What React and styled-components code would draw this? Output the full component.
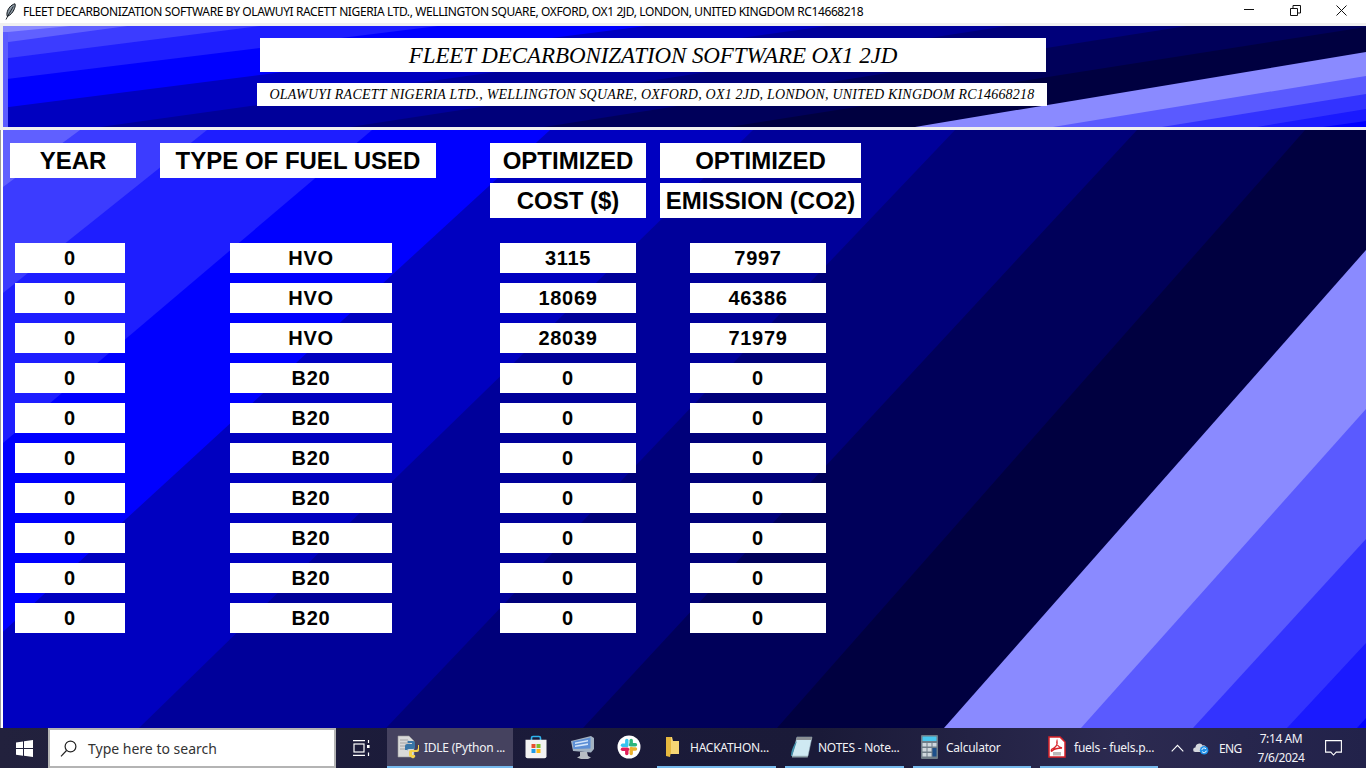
import React from "react";
import styled, { createGlobalStyle } from "styled-components";

const Global = createGlobalStyle`
  html, body { margin: 0; padding: 0; background: #f0f0f0; }
  body { width: 1366px; height: 768px; overflow: hidden; font-family: "Liberation Sans", Arial, sans-serif; }
  * { box-sizing: border-box; }
`;

const Page = styled.div`
  width: 1366px; height: 768px; display: flex; flex-direction: column; overflow: hidden; background: #f0f0f0;
`;
const TitleBar = styled.div`
  height: 23px; flex: none; background: #fff; display: flex; align-items: center; padding: 0 2px 0 5px; margin-bottom: 3px;
`;
const WindowTitle = styled.div`
  margin-left: 7px; flex: 1; font: 12px "Noto Sans", sans-serif; letter-spacing: -0.385px; color: #000; white-space: nowrap;
`;
const Controls = styled.div`display: flex; flex: none; margin-bottom: 3px;`;
const ControlButton = styled.div`
  width: 46px; height: 20px; display: flex; align-items: center; justify-content: center;
`;
const Header = styled.header`
  position: relative; height: 101px; flex: none; margin: 0 0 3px 3px; padding: 12px 0 0 254px; overflow: hidden;
`;
const Art = styled.svg`
  position: absolute; inset: 0; width: 100%; height: 100%; display: block;
`;
const TitleBox = styled.div`
  position: relative; width: 786px; height: 34px; margin-left: 3px; background: #fff; text-align: center;
  font: italic 23px/36px "Liberation Serif", serif; letter-spacing: -0.08px; color: #000; white-space: nowrap;
`;
const SubBox = styled.div`
  position: relative; width: 790px; height: 23px; margin-top: 11px; background: #fff; text-align: center;
  font: italic 14px/23px "Liberation Serif", serif; letter-spacing: 0.21px; color: #000; white-space: nowrap;
`;
const Main = styled.main`
  position: relative; flex: none; height: 598px; margin-left: 3px; padding: 13px 0 0 7px; overflow: hidden;
`;
const MainEdge = styled.div`
  position: absolute; left: 0; top: 130px; width: 3px; height: 598px; background: #fff; border-left: 1px solid #9a9a9a;
`;
const HeadRow = styled.div`position: relative; display: flex; align-items: flex-start; height: 75px; margin-bottom: 25px;`;
const HeadColumn = styled.div`
  display: flex; flex-direction: column; gap: 5px; width: ${p => p.$w}px; margin-right: ${p => p.$after || 0}px;
`;
const HeadCell = styled.div`
  height: 35px; background: #fff; color: #000; text-align: center;
  font: bold 24px/36px "Liberation Sans", Arial, sans-serif; white-space: nowrap;
`;
const Rows = styled.div`position: relative; display: flex; flex-direction: column; gap: 10px; margin-left: 5px;`;
const Row = styled.div`display: flex;`;
const Cell = styled.div`
  width: ${p => p.$w}px; margin-right: ${p => p.$after || 0}px; height: 30px; background: #fff; color: #000; text-align: center;
  font: bold 20px/30px "Liberation Sans", Arial, sans-serif; letter-spacing: 0.7px;
`;
const Taskbar = styled.footer`
  height: 40px; flex: none; display: flex; align-items: stretch; color: #f2f2f6;
  background: linear-gradient(90deg, #22213d 0%, #1b1b3a 30%, #1a1a38 60%, #2c2a50 82%, #22224a 100%);
`;
const StartButton = styled.div`width: 48px; flex: none; display: flex; align-items: center; justify-content: center;`;
const SearchBox = styled.div`
  width: 288px; flex: none; display: flex; align-items: center; padding-left: 10px; gap: 11px; background: #fff;
  border: 2px solid #b4b4b4; color: #333; font: 14px "Noto Sans", sans-serif;
`;
const TaskView = styled.div`width: 51px; flex: none; display: flex; align-items: center; justify-content: center;`;
const TaskItem = styled.div`
  width: ${p => p.$w}px; flex: none; margin-right: ${p => p.$after || 0}px; display: flex; align-items: center;
  padding-left: ${p => p.$pad}px; gap: ${p => p.$gap}px; font: 12px "Noto Sans", sans-serif; letter-spacing: -0.25px; white-space: nowrap;
  background: ${p => (p.$active ? "#45425f" : "transparent")};
  border-bottom: 2px solid #76b9ed;
`;
const PinnedItem = styled.div`
  width: ${p => p.$w}px; flex: none; display: flex; align-items: center; justify-content: center; padding-bottom: 2px;
`;
const Tray = styled.div`flex: 1; display: flex; align-items: center; padding-left: 13px;`;
const TrayIcon = styled.div`display: flex; align-items: center; justify-content: center; width: ${p => p.$w}px; flex: none;`;
const Lang = styled.div`font: 12px "Noto Sans", sans-serif; letter-spacing: -0.7px; width: 30px; margin-left: 1px; flex: none;`;
const Clock = styled.div`
  width: 64px; flex: none; text-align: center; font: 12px/19px "Noto Sans", sans-serif; letter-spacing: -0.4px;
`;

const P = {
  a: "#6060ff", b: "#3c3cff", c: "#1e1eff", d: "#0000ff", e: "#0000c0", f: "#00009a", g: "#00007a", h: "#00005a", i: "#000040",
  j: "#8a8aff", k: "#5a5aff", l: "#3333ff", m: "#1a1aff", n: "#0000ff",
};

const mainEdges = [
  [80, 130, 3, 187, P.b],
  [207, 130, 3, 293, P.c],
  [372, 130, 3, 443, P.d],
  [550, 130, 5, 630, P.e],
  [753, 130, 140, 727, P.f],
  [955, 130, 387, 727, P.g],
  [1137, 130, 583, 728, P.h],
  [1305, 130, 777, 728, P.i],
  [1366, 250, 944, 728, P.j],
  [1366, 409, 1081, 728, P.k],
  [1366, 539, 1193, 728, P.l],
  [1366, 643, 1287, 728, P.m],
  [1366, 718, 1357, 728, P.n],
];
const headerEdges = [
  [120, 27, 8, 42, P.b],
  [260, 26, 8, 58, P.c],
  [438, 26, 8, 79, P.d],
  [646, 26, 8, 107, P.e],
  [827, 26, 100, 127, P.f],
  [1007, 26, 350, 127, P.g],
  [1187, 26, 544, 127, P.h],
  [1366, 27, 729, 127, P.i],
  [1366, 52, 915, 127, P.j],
  [1366, 76, 1053, 127, P.k],
  [1366, 94, 1162, 127, P.l],
  [1366, 109, 1257, 127, P.m],
  [1366, 121, 1323, 127, P.n],
];
const wedge = ([x1, y1, x2, y2]) => {
  const dx = x1 - x2, dy = y1 - y2;
  return `${x1 + dx * 30},${y1 + dy * 30} ${x2 - dx * 30},${y2 - dy * 30} 90000,90000`;
};
const Stripes = ({ box, edges, children, base }) => (
  <Art viewBox={box} preserveAspectRatio="none" aria-hidden="true">
    <rect x="0" y="0" width="1366" height="768" fill={base} />
    {edges.map((e, i) => <polygon key={i} points={wedge(e)} fill={e[4]} />)}
    {children}
  </Art>
);

const Feather = () => (
  <svg width="11" height="17" viewBox="0 0 11 17">
    <path d="M10 .8C6 1.800 2.800 5.500 2 10c-.2 1.300-.1 2.500.3 3.400C5.500 12.300 8.300 9 9.500 5.500 10.100 3.800 10.500 2 10 .8Z" fill="#8d9aa6" stroke="#10161c" strokeWidth="1" />
    <path d="M8.300 3.500 4 10.800 1 16.500" fill="none" stroke="#10161c" strokeWidth=".9" />
  </svg>
);
const MinIcon = () => <svg width="10" height="12" viewBox="0 0 10 12"><path d="M0 5.500h10" stroke="#111" strokeWidth="1" /></svg>;
const RestoreIcon = () => (
  <svg width="11" height="11" viewBox="0 0 11 11" fill="none" stroke="#111">
    <path d="M.5 3.500h7v7h-7zM3 3.500V.5h7.500v7.500H7.500" />
  </svg>
);
const CloseIcon = () => <svg width="11" height="11" viewBox="0 0 11 11"><path d="M.5.5l10 10M10.500.5l-10 10" stroke="#111" strokeWidth="1" /></svg>;

const WinLogo = () => (
  <svg width="17" height="17" viewBox="0 0 17 17" fill="#fff">
    <path d="M0 2.400 7 1.400v6.700H0zM8 1.300 17 0v8.100H8zM0 9h7v6.700L0 14.700zM8 9h9v8l-9-1.200z" />
  </svg>
);
const SearchIcon = () => (
  <svg width="17" height="17" viewBox="0 0 17 17" fill="none" stroke="#222" strokeWidth="1.200">
    <circle cx="10.500" cy="6.500" r="5.400" />
    <path d="M6.500 10.500 1 16.300" />
  </svg>
);
const TaskViewIcon = () => (
  <svg width="17" height="16" viewBox="0 0 17 16" fill="none" stroke="#fff" strokeWidth="1.200">
    <path d="M0 .7h12M0 15.300h12" />
    <rect x="1" y="4" width="10" height="8" />
    <path d="M15.500 0v3M15.500 12.500V16" />
    <rect x="14" y="5" width="2.600" height="3" fill="#fff" stroke="none" />
  </svg>
);
const PythonDoc = () => (
  <svg width="24" height="24" viewBox="0 0 24 24">
    <path d="M1 1h11l5 5v16H1z" fill="#d9d9d9" stroke="#9c9c9c" strokeWidth=".6" />
    <path d="M3 5h8M3 8h10M3 11h7M3 14h6" stroke="#a3a3a3" strokeWidth="1" />
    <path d="M12 6h4a2 2 0 0 1 2 2v4a2 2 0 0 1-2 2h-4a2 2 0 0 0-2 2v-1H8v-4a2 2 0 0 1 2-2h5V8h-4a1 1 0 0 1 1-2Z" fill="#3a76a8" />
    <path d="M22 10v5a2 2 0 0 1-2 2h-5v3h3a2 2 0 0 1-4 2 2 2 0 0 1-2-2v-3a2 2 0 0 1 2-2h5a2 2 0 0 0 2-2v-3Z" fill="#f6d24a" />
  </svg>
);
const StoreIcon = () => (
  <svg width="24" height="24" viewBox="0 0 24 24">
    <path d="M7.500 5V3a1.500 1.500 0 0 1 1.500-1.500h6A1.500 1.500 0 0 1 16.500 3v2" fill="none" stroke="#2fb4ee" strokeWidth="1.600" />
    <path d="M1.500 4.800h21v16.400a2 2 0 0 1-2 2h-17a2 2 0 0 1-2-2z" fill="#f3f3f3" />
    <rect x="7.500" y="9" width="4" height="4" fill="#e8502f" />
    <rect x="12.500" y="9" width="4" height="4" fill="#7ebf2e" />
    <rect x="7.500" y="14" width="4" height="4" fill="#1f9be8" />
    <rect x="12.500" y="14" width="4" height="4" fill="#fdb913" />
  </svg>
);
const MonitorIcon = () => (
  <svg width="24" height="23" viewBox="0 0 24 23">
    <path d="M9 16h7l1 4 3 1.500-3 1.500H10l-4-1.500L9 20z" fill="#b9bec4" />
    <path d="M0 5 20 0l3 2v11l-3 3.500L2 15z" fill="#a3b2c2" />
    <path d="M1.500 5.500 19.500 1.500v11L2.500 13z" fill="#5d8fd6" />
    <path d="M4 6.500l13-2.500v1.600L4 8zM4 9.500l13-2.200v1.600L4 11z" fill="#d4e5fb" />
  </svg>
);
const SlackIcon = () => (
  <svg width="24" height="24" viewBox="0 0 24 24">
    <circle cx="12" cy="12" r="11.500" fill="#fff" />
    <g strokeWidth="3.400" strokeLinecap="round" fill="none">
      <path d="M9.800 5.500v5" stroke="#36c5f0" /><path d="M5.500 10.200h3.500" stroke="#36c5f0" />
      <path d="M18.500 9.800h-5" stroke="#2eb67d" /><path d="M14.200 5.500v3.500" stroke="#2eb67d" />
      <path d="M14.200 18.500v-5" stroke="#ecb22e" /><path d="M18.500 14h-3.500" stroke="#ecb22e" />
      <path d="M5.500 14.200h5" stroke="#e01e5a" /><path d="M9.800 18.500v-3.500" stroke="#e01e5a" />
    </g>
  </svg>
);
const FolderIcon = () => (
  <svg width="13" height="20" viewBox="0 0 13 20">
    <path d="M0 0h6l1 4h6v13H4z" fill="#f7d675" />
    <path d="M0 0h5v15l-1 5-4-1z" fill="#e6b83f" />
  </svg>
);
const NoteIcon = () => (
  <svg width="23" height="23" viewBox="0 0 23 23">
    <path d="M7 1h15l-4 19H2z" fill="#cfe9f2" stroke="#9bb5c0" strokeWidth=".5" />
    <path d="M2 20 7 5c-3 3-6 9-6 15z" fill="#3f8eaa" />
    <path d="M7 1h15l-.6 3H6z" fill="#8a8f94" />
    <path d="M2 20h16l-.3 1.500H2z" fill="#8fa3ab" />
  </svg>
);
const CalcIcon = () => (
  <svg width="17" height="24" viewBox="0 0 17 24">
    <rect width="17" height="24" rx="1" fill="#6f7d88" />
    <rect x="1.500" y="1.500" width="14" height="4.500" fill="#48c6ee" />
    <g fill="#cfd8de">
      <rect x="1.500" y="8" width="4" height="3.500" /><rect x="6.500" y="8" width="4" height="3.500" /><rect x="11.500" y="8" width="4" height="3.500" />
      <rect x="1.500" y="13" width="4" height="3.500" /><rect x="6.500" y="13" width="4" height="3.500" />
      <rect x="1.500" y="18" width="4" height="3.500" /><rect x="6.500" y="18" width="4" height="3.500" />
    </g>
    <rect x="11.500" y="13" width="4" height="8.500" fill="#1d4f8a" />
  </svg>
);
const PdfIcon = () => (
  <svg width="18" height="22" viewBox="0 0 18 22">
    <path d="M1 1h11l5 5v15H1z" fill="#fff" stroke="#d8232a" strokeWidth="1.500" />
    <path d="M4 13c3-1 6-4 5-8-1 3 1 6 5 7-3 0-7 0-10 3-1 1-1-1 0-2Z" fill="none" stroke="#d8232a" strokeWidth="1.300" />
    <rect x="5" y="16" width="8" height="3.500" fill="#b9b9b9" />
  </svg>
);
const Chevron = () => <svg width="13" height="8" viewBox="0 0 13 8"><path d="M.7 7.300 6.500 1.300l5.800 6" fill="none" stroke="#fff" strokeWidth="1.100" /></svg>;
const CloudSync = () => (
  <svg width="16" height="13" viewBox="0 0 18 14">
    <path d="M2.500 11A2.500 2.500 0 0 1 2.800 6 4.500 4.500 0 0 1 11 3.500a3.500 3.500 0 0 1 4 3V11z" fill="#d4d7dd" />
    <circle cx="12.500" cy="9" r="4.800" fill="#1f8fe8" />
    <path d="M10 8.500a2.600 2.600 0 0 1 4.700-1M15 9.500a2.600 2.600 0 0 1-4.700 1" fill="none" stroke="#fff" strokeWidth="1.100" />
  </svg>
);
const Notify = () => (
  <svg width="17" height="16" viewBox="0 0 17 16" fill="none" stroke="#fff" strokeWidth="1.100">
    <path d="M.6.600h15.800v11.500h-5.200L8.500 15l-2.700-2.900H.6z" />
  </svg>
);

const rows = [
  ["0", "HVO", "3115", "7997"],
  ["0", "HVO", "18069", "46386"],
  ["0", "HVO", "28039", "71979"],
  ...Array.from({ length: 7 }, () => ["0", "B20", "0", "0"]),
];

export default function App() {
  return (
    <Page>
      <Global />
      <TitleBar>
        <Feather />
        <WindowTitle>FLEET DECARBONIZATION SOFTWARE BY OLAWUYI RACETT NIGERIA LTD., WELLINGTON SQUARE, OXFORD, OX1 2JD, LONDON, UNITED KINGDOM RC14668218</WindowTitle>
        <Controls>
          <ControlButton><MinIcon /></ControlButton>
          <ControlButton><RestoreIcon /></ControlButton>
          <ControlButton><CloseIcon /></ControlButton>
        </Controls>
      </TitleBar>
      <Header>
        <Stripes box="3 26 1363 101" edges={headerEdges} base={P.a}>
          <rect x="3" y="26" width="5" height="101" fill="#5c5cff" />
          <polygon points="3,26 70,26 8,32 3,32" fill="#8a8aff" />
        </Stripes>
        <TitleBox>FLEET DECARBONIZATION SOFTWARE OX1 2JD</TitleBox>
        <SubBox>OLAWUYI RACETT NIGERIA LTD., WELLINGTON SQUARE, OXFORD, OX1 2JD, LONDON, UNITED KINGDOM RC14668218</SubBox>
      </Header>
      <MainEdge />
      <Main>
        <Stripes box="3 130 1363 598" edges={mainEdges} base={P.a} />
        <HeadRow>
          <HeadColumn $w={126} $after={24}><HeadCell>YEAR</HeadCell></HeadColumn>
          <HeadColumn $w={276} $after={54}><HeadCell>TYPE OF FUEL USED</HeadCell></HeadColumn>
          <HeadColumn $w={156} $after={14}><HeadCell>OPTIMIZED</HeadCell><HeadCell>COST ($)</HeadCell></HeadColumn>
          <HeadColumn $w={201}><HeadCell>OPTIMIZED</HeadCell><HeadCell>EMISSION (CO2)</HeadCell></HeadColumn>
        </HeadRow>
        <Rows>
          {rows.map((r, i) => (
            <Row key={i}>
              <Cell $w={110} $after={105}>{r[0]}</Cell>
              <Cell $w={162} $after={108}>{r[1]}</Cell>
              <Cell $w={136} $after={54}>{r[2]}</Cell>
              <Cell $w={136}>{r[3]}</Cell>
            </Row>
          ))}
        </Rows>
      </Main>
      <Taskbar>
        <StartButton><WinLogo /></StartButton>
        <SearchBox><SearchIcon /><span>Type here to search</span></SearchBox>
        <TaskView><TaskViewIcon /></TaskView>
        <TaskItem $w={126} $active $pad={10} $gap={3}><PythonDoc />IDLE (Python ...</TaskItem>
        <PinnedItem $w={46}><StoreIcon /></PinnedItem>
        <PinnedItem $w={47}><MonitorIcon /></PinnedItem>
        <PinnedItem $w={46}><SlackIcon /></PinnedItem>
        <PinnedItem $w={5} />
        <TaskItem $w={119} $after={9} $pad={9} $gap={11}><FolderIcon />HACKATHON...</TaskItem>
        <TaskItem $w={119} $after={9} $pad={5} $gap={5}><NoteIcon />NOTES - Note...</TaskItem>
        <TaskItem $w={118} $after={9} $pad={8} $gap={8}><CalcIcon />Calculator</TaskItem>
        <TaskItem $w={118} $pad={8} $gap={8}><PdfIcon />fuels - fuels.p...</TaskItem>
        <Tray>
          <TrayIcon $w={13}><Chevron /></TrayIcon>
          <TrayIcon $w={34}><CloudSync /></TrayIcon>
          <Lang>ENG</Lang>
          <Clock>7:14 AM<br />7/6/2024</Clock>
          <TrayIcon $w={40}><Notify /></TrayIcon>
        </Tray>
      </Taskbar>
    </Page>
  );
}
